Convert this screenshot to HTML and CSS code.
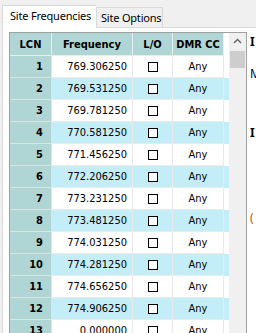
FILE: index.html
```html
<!DOCTYPE html>
<html>
<head>
<meta charset="utf-8">
<link rel="stylesheet" href="styles.css">
</head>
<body>
<div class="window">
  <div class="tabs">
    <div class="tab active">Site Frequencies</div>
    <div class="tab">Site Options</div>
  </div>
  <div class="page">
    <div class="grid">
      <div class="table-area">
        <div class="row head">
          <div class="cell hd">LCN</div>
          <div class="cell hd">Frequency</div>
          <div class="cell hd">L/O</div>
          <div class="cell hd">DMR CC</div>
        </div>
        <div class="row"><div class="cell lcn">1</div><div class="cell freq">769.306250</div><div class="cell lo"><span class="box"></span></div><div class="cell cc">Any</div></div>
        <div class="row alt"><div class="cell lcn">2</div><div class="cell freq">769.531250</div><div class="cell lo"><span class="box"></span></div><div class="cell cc">Any</div></div>
        <div class="row"><div class="cell lcn">3</div><div class="cell freq">769.781250</div><div class="cell lo"><span class="box"></span></div><div class="cell cc">Any</div></div>
        <div class="row alt"><div class="cell lcn">4</div><div class="cell freq">770.581250</div><div class="cell lo"><span class="box"></span></div><div class="cell cc">Any</div></div>
        <div class="row"><div class="cell lcn">5</div><div class="cell freq">771.456250</div><div class="cell lo"><span class="box"></span></div><div class="cell cc">Any</div></div>
        <div class="row alt"><div class="cell lcn">6</div><div class="cell freq">772.206250</div><div class="cell lo"><span class="box"></span></div><div class="cell cc">Any</div></div>
        <div class="row"><div class="cell lcn">7</div><div class="cell freq">773.231250</div><div class="cell lo"><span class="box"></span></div><div class="cell cc">Any</div></div>
        <div class="row alt"><div class="cell lcn">8</div><div class="cell freq">773.481250</div><div class="cell lo"><span class="box"></span></div><div class="cell cc">Any</div></div>
        <div class="row"><div class="cell lcn">9</div><div class="cell freq">774.031250</div><div class="cell lo"><span class="box"></span></div><div class="cell cc">Any</div></div>
        <div class="row alt"><div class="cell lcn">10</div><div class="cell freq">774.281250</div><div class="cell lo"><span class="box"></span></div><div class="cell cc">Any</div></div>
        <div class="row"><div class="cell lcn">11</div><div class="cell freq">774.656250</div><div class="cell lo"><span class="box"></span></div><div class="cell cc">Any</div></div>
        <div class="row alt"><div class="cell lcn">12</div><div class="cell freq">774.906250</div><div class="cell lo"><span class="box"></span></div><div class="cell cc">Any</div></div>
        <div class="row"><div class="cell lcn">13</div><div class="cell freq">0.000000</div><div class="cell lo"><span class="box"></span></div><div class="cell cc">Any</div></div>
      </div>
      <div class="vscroll">
        <div class="arrow">
          <svg width="17" height="17" viewBox="0 0 17 17"><polyline points="5,10 8.5,6.5 12,10" fill="none" stroke="#606060" stroke-width="1.3"/></svg>
        </div>
        <div class="thumb"></div>
      </div>
    </div>
    <div class="side">
      <div class="lbl bold l1">I</div>
      <div class="lbl navy l2">M</div>
      <div class="lbl bold l3">I</div>
      <div class="lbl orange l4">(</div>
    </div>
  </div>
</div>
</body>
</html>
```

FILE: styles.css
```css
html, body {
  margin: 0;
  padding: 0;
  width: 256px;
  height: 333px;
  overflow: hidden;
  background: #f0f0f0;
}

.window {
  font-family: "DejaVu Sans Condensed", "Liberation Sans", sans-serif;
  font-size: 11px;
  color: #000;
}

.tabs {
  display: flex;
  align-items: flex-end;
  padding: 5px 0 0 2px;
  height: 22px;
  font-family: "Noto Sans", "Open Sans", sans-serif;
  font-size: 11px;
  letter-spacing: -0.2px;
}

.tab {
  box-sizing: border-box;
  height: 20px;
  padding: 0 0 0 4px;
  border: 1px solid #d9d9d9;
  border-bottom: none;
  background: #f0f0f0;
  line-height: 19px;
  width: 67px;
  white-space: nowrap;
}

.tab.active {
  background: #fff;
  height: 23px;
  width: 94px;
  margin-bottom: -1px;
  position: relative;
  z-index: 1;
  line-height: 20px;
  padding-left: 7px;
  border-right: none;
}

.page {
  display: flex;
  margin-left: 2px;
  border-top: 1px solid #d9d9d9;
  border-left: 1px solid #d9d9d9;
  background: #fff;
  padding: 4px 0 0 6px;
  height: 400px;
  align-items: flex-start;
}

.grid {
  display: flex;
  border: 1px solid #a0a0a0;
  border-bottom: none;
  background: #fff;
  width: 236px;
}

.table-area {
  width: 219px;
}

.row {
  display: grid;
  grid-template-columns: 42px 81px 40px 51px;
  height: 22px;
  background: #fff;
}

.row.alt {
  background: #c4eef7;
}

.row.head {
  height: 23px;
}

.cell {
  box-sizing: border-box;
  border-right: 1px solid #eaeaea;
  border-bottom: 1px solid #eaeaea;
  display: flex;
  align-items: center;
  white-space: nowrap;
  overflow: hidden;
}

.hd {
  background: #b0d5d5;
  font-weight: bold;
  justify-content: center;
  border-color: #e6efef;
}

.lcn {
  background: #b0d5d5;
  font-weight: bold;
  justify-content: flex-end;
  padding-right: 8px;
  border-color: #d8e8e8;
}

.freq {
  justify-content: flex-end;
  padding-right: 5px;
}

.lo {
  justify-content: center;
}

.cc {
  justify-content: center;
}

.box {
  display: block;
  width: 8px;
  height: 8px;
  border: 1px solid #000;
  background: #fff;
  margin-left: 1px;
}

.vscroll {
  width: 17px;
  height: 320px;
  background: #f0f0f0;
}

.arrow {
  height: 17px;
}

.arrow svg {
  display: block;
}

.thumb {
  margin: 1px 1px 0 1px;
  height: 17px;
  background: #cdcdcd;
}

.side {
  padding-left: 3px;
  font-family: "Noto Sans", "Open Sans", sans-serif;
  font-size: 12px;
  line-height: 14px;
}

.lbl {
  white-space: nowrap;
}

.bold {
  font-weight: bold;
}

.navy {
  color: #000040;
}

.orange {
  color: #b06000;
}

.l1 { margin-top: 3px; }
.l2 { margin-top: 18px; }
.l3 { margin-top: 45px; }
.l4 { margin-top: 71px; }
```
